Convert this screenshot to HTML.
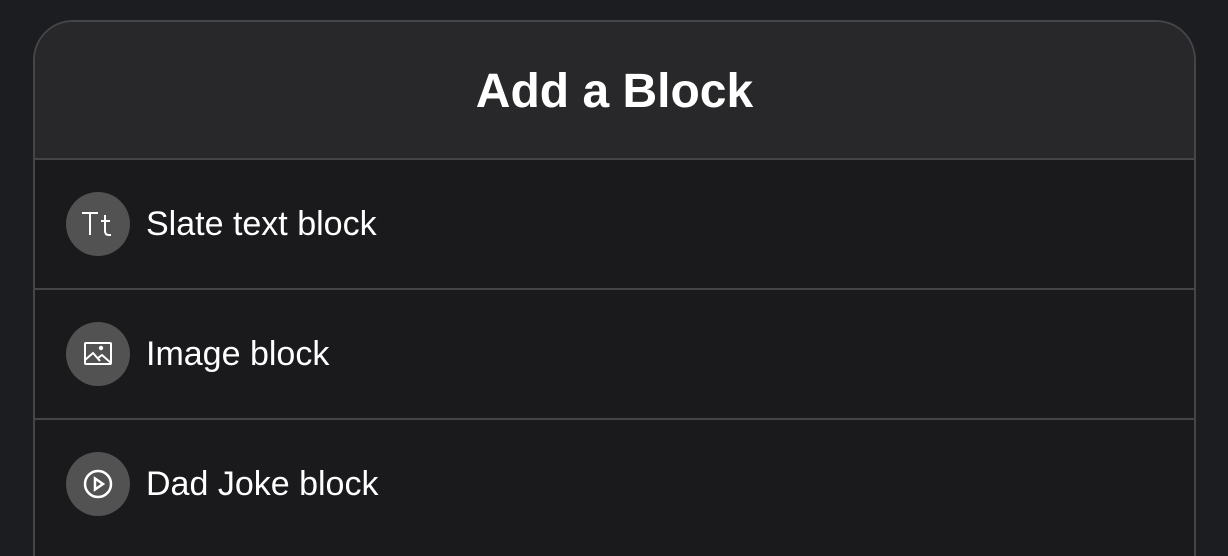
<!DOCTYPE html>
<html style="height:556px;overflow:hidden"><head><style>
body{margin:0;width:1228px;height:556px;background:#1c1d21;overflow:hidden;font-family:"Liberation Sans",sans-serif;position:relative;}
.card{position:absolute;left:33px;top:20px;width:1163px;height:536px;border:2px solid #454548;border-bottom:none;border-radius:40px 40px 0 0;background:#1a1a1c;overflow:hidden;box-sizing:border-box;}
.hd{height:138px;background:#28282b;border-bottom:2px solid #454548;display:flex;align-items:center;justify-content:center;color:#fff;font-weight:bold;font-size:48px;box-sizing:border-box;padding-top:2px;}
.row{height:130px;border-bottom:2px solid #454548;box-sizing:border-box;display:flex;align-items:center;padding-left:31px;color:#fff;font-size:34px;}
.row:last-child{border-bottom:none;height:128px;}
.ic{width:64px;height:64px;border-radius:50%;background:#525252;margin-right:16px;display:flex;align-items:center;justify-content:center;color:#fff;}
</style></head><body>
<div class="card">
<div class="hd">Add a Block</div>
<div class="row"><div class="ic"><svg width="40" height="40" viewBox="0 0 40 40" fill="none" stroke="#fff" stroke-width="2"><path d="M4 9H20M12 9V31"/><path d="M27 11V27q0 4 4 4h2M23 17h9"/></svg></div>Slate text block</div>
<div class="row"><div class="ic"><svg width="28" height="24" viewBox="0 0 28 24" fill="none" stroke="#fff" stroke-width="2"><rect x="1" y="1" width="26" height="21" rx="1"/><path d="M1 18l8-7 7 8M14 16l4-3 9 8"/><circle cx="17" cy="6" r="1.2" fill="#fff"/></svg></div>Image block</div>
<div class="row"><div class="ic"><svg width="32" height="32" viewBox="0 0 32 32" fill="none" stroke="#fff" stroke-width="2.5"><circle cx="16" cy="16" r="13"/><path d="M13 10.5v11l8-5.5z"/></svg></div>Dad Joke block</div>
</div>
</body></html>
